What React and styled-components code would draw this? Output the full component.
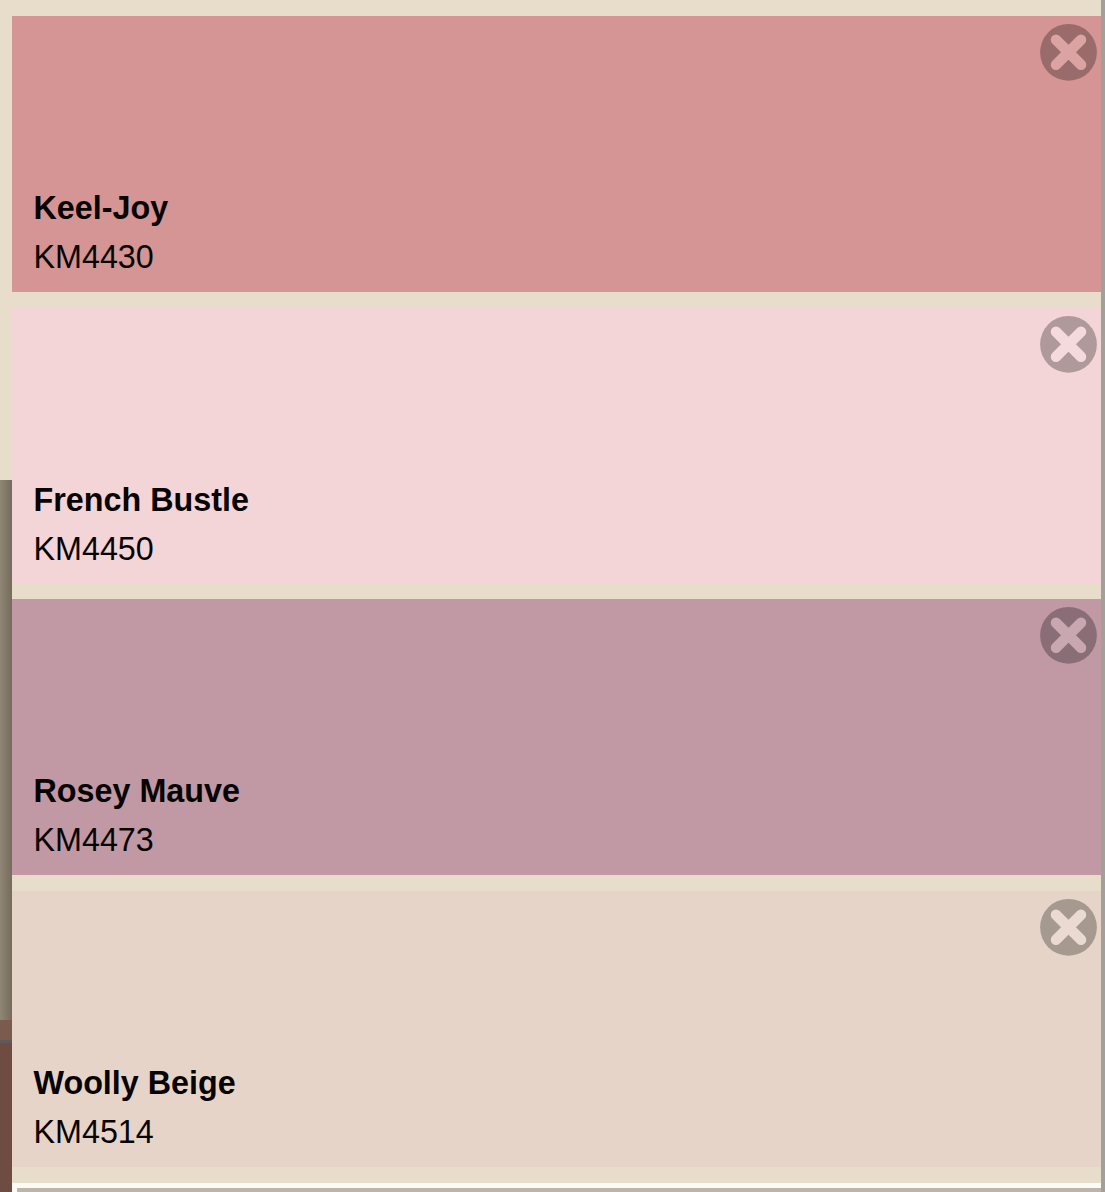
import React from 'react';
import styled, { createGlobalStyle } from 'styled-components';

const GlobalStyle = createGlobalStyle`
    html, body {
        margin: 0;
        padding: 0;
        height: 100%;
        overflow: hidden;
        background: #e8dcca;
    }
`;

const colors = [
    { name: 'Keel-Joy', code: 'KM4430', bg: '#d59594' },
    { name: 'French Bustle', code: 'KM4450', bg: '#f3d4d7' },
    { name: 'Rosey Mauve', code: 'KM4473', bg: '#c099a5' },
    { name: 'Woolly Beige', code: 'KM4514', bg: '#e7d4c8' },
];

const Page = styled.div`
    width: 1105px;
    height: 1192px;
    display: flex;
    overflow: hidden;
    font-family: "Liberation Sans", Arial, sans-serif;
    color: #070303;
`;

const Backdrop = styled.div`
    width: 12px;
    flex: none;
    display: flex;
    flex-direction: column;
`;

const BackdropPart = styled.div`
    height: ${props => props.$h}px;
    flex: ${props => props.$h ? 'none' : 1};
    background: ${props => props.$bg};
`;

const Panel = styled.div`
    flex: 1;
    display: flex;
    flex-direction: column;
    background: #e8dcca;
`;

const List = styled.div`
    display: flex;
    flex-direction: column;
    gap: 15.67px;
    padding-top: 16px;
`;

const Swatch = styled.div`
    height: 276px;
    position: relative;
    box-sizing: border-box;
    padding: 0 21.5px 10px;
    display: flex;
    flex-direction: column;
    justify-content: flex-end;
    background: ${props => props.$bg};
`;

const Name = styled.div`
    font-size: 32.3px;
    font-weight: 700;
    line-height: 49px;
`;

const Code = styled.div`
    font-size: 32.3px;
    line-height: 49px;
`;

const Close = styled.svg`
    position: absolute;
    top: 7px;
    right: 3px;
    width: 60px;
    height: 60px;
`;

const Footer = styled.div`
    margin-top: 16px;
    flex: 1;
    border-top: 5px solid #fbfaf4;
    border-left: 5px solid #fbfaf4;
    background: #bdb5aa;
`;

const RightEdge = styled.div`
    width: 4px;
    flex: none;
    background: #a3a099;
`;

const crossPath = 'M18 16.8 L43 41.8 M43 16.8 L18 41.8';

function CloseIcon({ id }) {
    return (
        <Close viewBox="0 0 60 60">
            <mask id={id}>
                <rect width="60" height="60" fill="#fff" />
                <path d={crossPath} stroke="#000" strokeWidth="10.5" strokeLinecap="round" />
            </mask>
            <circle cx="30.5" cy="29.3" r="28.4" fill="rgba(0,0,0,0.28)" mask={`url(#${id})`} />
            <path d={crossPath} stroke="rgba(255,255,255,0.14)" strokeWidth="10.5" strokeLinecap="round" />
        </Close>
    );
}

export default function App() {
    return (
        <Page>
            <GlobalStyle />
            <Backdrop>
                <BackdropPart $h={480} $bg="#e8dcca" />
                <BackdropPart $h={540} $bg="linear-gradient(90deg, #8f8675, #756c5c)" />
                <BackdropPart $h={20} $bg="#7b5b4d" />
                <BackdropPart $h={3} $bg="#5d5a5c" />
                <BackdropPart $bg="#6f4c41" />
            </Backdrop>
            <Panel>
                <List>
                    {colors.map((c, i) => (
                        <Swatch key={c.code} $bg={c.bg}>
                            <Name>{c.name}</Name>
                            <Code>{c.code}</Code>
                            <CloseIcon id={`x${i}`} />
                        </Swatch>
                    ))}
                </List>
                <Footer />
            </Panel>
            <RightEdge />
        </Page>
    );
}
